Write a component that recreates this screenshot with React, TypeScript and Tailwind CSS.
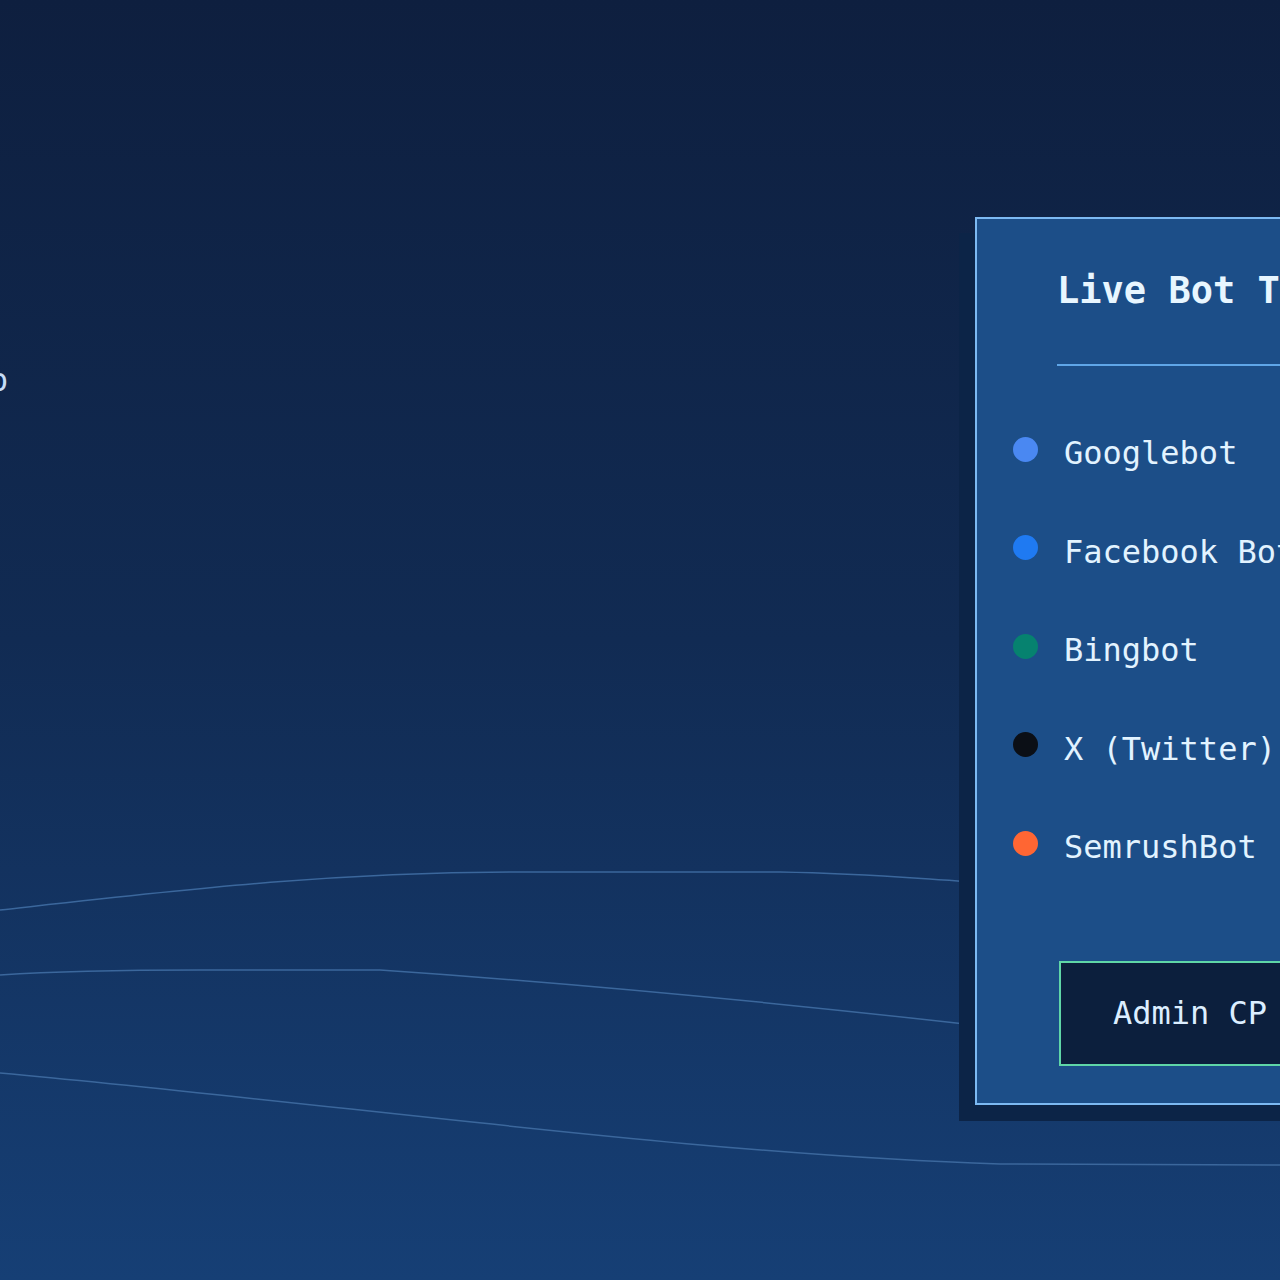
import { CSSProperties } from 'react';

const mono: CSSProperties = { fontFamily: '"DejaVu Sans Mono", "Liberation Mono", monospace' };

const bots = [
    { name: 'Googlebot', color: 'bg-[#4a88f2]' },
    { name: 'Facebook Bot', color: 'bg-[#1f7af2]' },
    { name: 'Bingbot', color: 'bg-[#06826f]' },
    { name: 'X (Twitter)', color: 'bg-[#0b0f16]' },
    { name: 'SemrushBot', color: 'bg-[#ff6633]' },
];

// Soft background lines that run behind the tracker card
function Waves() {
    return (
        <svg className="pointer-events-none absolute inset-0 h-full w-full" viewBox="0 0 1280 1280" preserveAspectRatio="none">
            <g fill="none" stroke="#3b679c" strokeWidth="1.5">
                <path d="M0 910 C 180 890, 330 872, 520 872 L 780 872 C 880 874, 950 880, 1280 905" />
                <path d="M0 975 C 60 971, 120 970, 200 970 L 380 970 C 600 985, 800 1005, 1000 1028 S 1200 1050, 1280 1060" />
                <path d="M0 1073 C 350 1105, 700 1155, 1000 1164 L 1280 1165" />
            </g>
        </svg>
    );
}

export default function App() {
    return (
        <div className="relative h-[1280px] w-[1280px] overflow-hidden bg-gradient-to-b from-[#0e1f3f] via-[#112b53] to-[#163f75]" style={mono}>
            <Waves />

            <div className="relative flex">
                {/* hero copy, mostly scrolled past the left edge */}
                <div className="w-[975px] shrink-0 pt-[360px]">
                    <p className="-ml-[11px] text-[32px] leading-[40px] text-[#c6dcf7]">o</p>
                </div>

                <section className="mt-[217px] h-[888px] w-[440px] shrink-0 border-2 border-[#7cb9f2] bg-[#1c4e88] shadow-[-16px_16px_0_0_#0c2447]">
                    <h2 className="pl-[80px] pt-[50px] pb-[2px] text-[37px] font-bold leading-[44px] whitespace-nowrap text-[#e8f6ff]">Live Bot Tracker</h2>
                    <div className="ml-[80px] mt-[49px] h-[2px] bg-[#5fa6e8]" />

                    <ul className="mt-[70px] flex flex-col gap-[58.5px] pl-[36px]">
                        {bots.map((bot) => (
                            <li key={bot.name} className="flex h-[40px] items-start gap-[26px]">
                                <span className={`mt-[0.5px] h-[25px] w-[25px] shrink-0 rounded-full ${bot.color}`} />
                                <span className="-mt-[3px] text-[32px] leading-[40px] whitespace-nowrap text-[#e2f3ff]">{bot.name}</span>
                            </li>
                        ))}
                    </ul>

                    <button className="ml-[82px] mt-[91px] flex h-[105px] w-[300px] items-center border-2 border-[#5fd6a8] bg-[#0c1f3d] pb-[2px] pl-[52px] text-[32px] whitespace-nowrap text-[#dceeff]">
                        Admin CP
                    </button>
                </section>
            </div>
        </div>
    );
}
